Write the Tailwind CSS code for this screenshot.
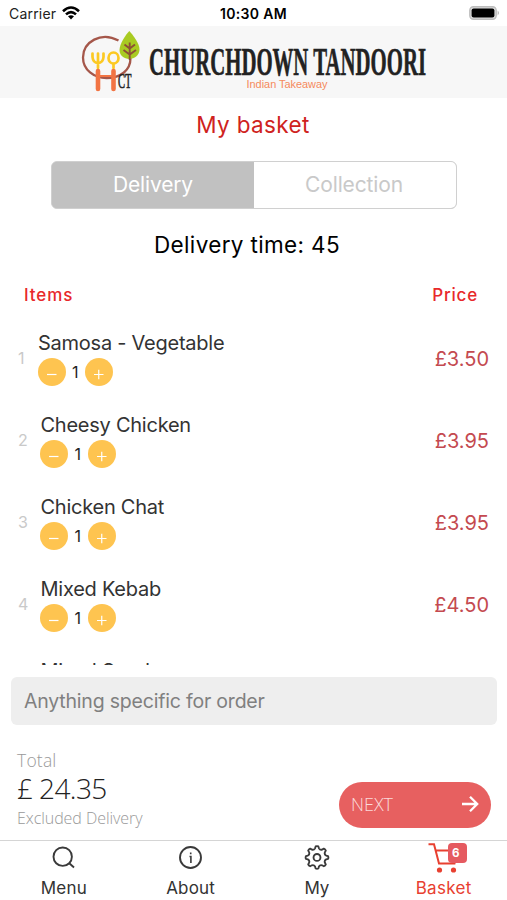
<!DOCTYPE html>
<html lang="en">
<head>
<meta charset="utf-8">
<title>My basket</title>
<script src="https://cdn.jsdelivr.net/npm/@tailwindcss/browser@4"></script>
</head>
<body class="bg-white">
<div class="flex h-[900px] w-[507px] flex-col overflow-hidden bg-white font-['Inter',sans-serif] text-[#333]">
  <!-- Status bar -->
  <div class="grid h-[26px] shrink-0 grid-cols-3 items-center pl-[9px] pr-[7px] pt-[2px] text-[14px] leading-none text-black">
    <div class="flex items-center gap-[6px]"><span class="tracking-[0.2px] text-[#222]">Carrier</span>
      <svg class="-mt-[2px] h-[14px] w-[18px]" viewBox="0 0 18 14"><g fill="none" stroke="#000" stroke-width="2.6"><path d="M1 5.2Q9-2.2 17 5.2"/><path d="M4 8.4Q9 3.8 14 8.4"/></g><path d="M6 10.3Q9 8 12 10.3L9 13.5Z"/></svg>
    </div>
    <div class="whitespace-nowrap pr-[2px] text-center font-semibold tracking-[0.3px]">10:30 AM</div>
    <svg class="-mt-[2px] h-[14px] w-[31px] justify-self-end" viewBox="0 0 31 14"><rect x=".8" y=".8" width="26.4" height="12.4" rx="3.6" fill="#ddd" stroke="#bdbdbd" stroke-width="1.4"/><rect x="2.6" y="2.6" width="22.8" height="8.8" rx="2" fill="#000"/><path d="M28.7 4.6Q31 7 28.7 9.4Z" fill="#aaa"/></svg>
  </div>
  <!-- Brand header -->
  <header class="h-[72px] shrink-0 bg-[#f7f7f7]">
    <svg class="block h-[72px] w-[507px]" viewBox="0 26 507 72">
      <path d="M118.500 40.500C101 31 83 42 83 57.500C83 70 94 78 106.500 78C121 78 130.500 70 130.500 58V53" fill="none" stroke="#a5574a" stroke-width="2.300"/>
      <path d="M129.300 31C133 35 140 44 139.500 50C139 55.500 134.500 59 129.300 59C124 59 119.500 55.500 119.500 50C119.500 44 125.500 35 129.300 31Z" fill="#a9cb22"/>
      <path d="M129.700 42.500V60M124.500 44.500L129.700 48.500L135 44.500M123.500 50L129.700 54.500L136 50" fill="none" stroke="#8d5135" stroke-width="1.900"/>
      <g fill="none" stroke="#fcc923" stroke-width="2.700" stroke-linecap="round"><path d="M92.500 53.500V57Q93 63 98 63Q103 63 103.500 57V53.500M98 53.500V68"/><ellipse cx="113.500" cy="58" rx="5" ry="5.500"/><path d="M113.500 64V68"/></g>
      <g fill="none" stroke="#f27443" stroke-linecap="round" stroke-width="4.600"><path d="M98 71V89M113.500 71V89"/><path d="M98 76H113" stroke-width="2"/></g>
      <text x="118" y="88" textLength="13.500" lengthAdjust="spacingAndGlyphs" font-family="Liberation Serif, serif" font-size="20" fill="#222" stroke="#222" stroke-width=".6">CT</text>
      <text x="149" y="74.500" textLength="277" lengthAdjust="spacingAndGlyphs" font-family="Liberation Serif, serif" font-weight="700" font-size="41" fill="#222" stroke="#222" stroke-width=".6">CHURCHDOWN TANDOORI</text>
      <text x="246.500" y="88.300" textLength="81" lengthAdjust="spacingAndGlyphs" font-family="Liberation Sans, sans-serif" font-size="11" fill="#f58a5c">Indian Takeaway</text>
    </svg>
  </header>

  <h1 class="mt-[12px] h-[30px] shrink-0 pr-px text-center text-[22.500px] leading-[30px] tracking-[0.350px] text-[#cf2220]">My basket</h1>

  <div class="ml-[51px] mt-[20.500px] grid h-[48px] w-[406px] shrink-0 grid-cols-2 overflow-hidden rounded-[6px] border-[1.500px] border-[#d0d0d0] bg-[#c1c1c1] text-center text-[21px] leading-[46px] tracking-[-0.150px]">
    <div class="bg-[#c1c1c1] text-white">Delivery</div>
    <div class="bg-white pr-[2px] text-[#c9c9c9]">Collection</div>
  </div>

  <div class="mt-[21.500px] h-[30px] shrink-0 pr-[13px] text-center text-[22.500px] leading-[30px] tracking-[0.350px] text-black">Delivery time: 45</div>

  <div class="mt-[24px] flex h-[22px] shrink-0 justify-between pl-[24px] pr-[29px] text-[17px] font-medium leading-[22px] text-[#e8282a]">
    <span class="tracking-[0.900px]">Items</span><span class="tracking-[0.800px]">Price</span>
  </div>

  <!-- Basket items, clipped at the bottom edge -->
  <ul id="items" class="h-[359px] shrink-0 overflow-hidden pt-[25px]"></ul>

  <div class="ml-[11px] mt-[12px] h-[48px] w-[486px] shrink-0 rounded-[6px] bg-[#eee] pl-[13px] text-[19.500px] leading-[48px] tracking-[-0.200px] text-[#808080]">Anything specific for order</div>

  <div class="flex h-[115px] shrink-0 items-start justify-between pl-[17px] pr-[16px] font-['Open_Sans',sans-serif] font-light">
    <div class="pt-[23px]">
      <div class="h-[24px] text-[17.500px] leading-[25px] tracking-[0.200px] text-[#999]">Total</div>
      <div class="h-[33px] text-[28px] leading-[33px] tracking-[-0.600px] text-[#222]">£ 24.35</div>
      <div class="h-[26px] text-[16px] leading-[26px] tracking-[-0.060px] text-[#999]">Excluded Delivery</div>
    </div>
    <div class="mt-[57px] flex h-[46px] w-[152px] items-center justify-between rounded-full bg-[#e76060] pl-[12px] pr-[12px] text-[18px] text-white"><span class="-mt-px text-[#fbdada]">NEXT</span>
      <svg class="-mt-[2px] h-[18px] w-[18px]" viewBox="0 0 18 18" fill="none" stroke="#fff" stroke-width="2.300"><path d="M1 9H16M9 1.800L16.200 9L9 16.200"/></svg>
    </div>
  </div>

  <!-- Tab bar -->
  <nav class="grid h-[60px] shrink-0 grid-cols-4 border-t border-[#d5d5d5] text-center text-[17px] leading-[22px]">
    <div class="flex flex-col items-center"><svg class="mt-[4px] h-[26px] w-[26px]" viewBox="0 0 26 26" fill="none" stroke="#3a3a3a" stroke-width="1.900"><circle cx="12.700" cy="11.700" r="9.200"/><path d="M19 18L24 22.500"/></svg><span class="mt-[6px] pl-px tracking-[0.200px]">Menu</span></div>
    <div class="flex flex-col items-center"><svg class="mt-[4px] h-[26px] w-[26px]" viewBox="0 0 26 26" fill="none" stroke="#3a3a3a" stroke-width="1.900"><circle cx="13.500" cy="12.500" r="10.500"/><path d="M12.500 11.500H13.900V18M13.700 7.500V9.300" stroke-width="1.600"/></svg><span class="mt-[6px] pl-px tracking-[0.200px]">About</span></div>
    <div class="flex flex-col items-center"><svg class="mt-[4px] h-[26px] w-[26px]" viewBox="0 0 24 24" fill="none" stroke="#3a3a3a" stroke-width="1.700" stroke-linejoin="round"><circle cx="12" cy="11.500" r="3.200"/><path id="gear" transform="translate(0 -.5)"/></svg><span class="mt-[6px]">My</span></div>
    <div class="flex flex-col items-center text-[#e84030]">
      <div class="relative mt-[1px] h-[31px] w-[38px]">
        <svg class="h-[31px] w-[38px]" viewBox="0 0 38 31" fill="none" stroke="#e84030" stroke-width="2"><path d="M3.500 2.200H9L14 21.500H29.500L32 8.500H10.500"/><circle cx="14.500" cy="28" r="2.600" fill="#e84030" stroke="none"/><circle cx="28.500" cy="28" r="2.600" fill="#e84030" stroke="none"/></svg>
        <span class="absolute left-[23px] top-[1px] h-[20px] w-[19px] rounded-[4px] bg-[#e55a60] pr-[3px] text-[11.500px] font-bold leading-[20px] text-white">6</span>
      </div>
      <span class="mt-[4px] tracking-[0.300px]">Basket</span>
    </div>
  </nav>
</div>
<template id="row">
  <li class="flex h-[82px] justify-between pr-[18px]">
    <div class="flex">
      <span class="num w-[38px] pl-[18px] pt-[17px] text-[16px] leading-[20px] text-[#c9c9c9]"></span>
      <div class="body">
        <div class="name h-[27px] text-[20px] leading-[24px] tracking-[-0.250px] whitespace-nowrap"></div>
        <div class="-ml-[0.500px] flex items-center">
          <svg class="h-[28px] w-[28px]" viewBox="0 0 28 28"><circle cx="14" cy="14" r="14" fill="#fec450"/><path d="M9 16.500H18.500" stroke="#fff" stroke-width="1.200"/></svg>
          <span class="w-[19.500px] text-center text-[16px] leading-[28px] text-[#222]">1</span>
          <svg class="h-[28px] w-[28px]" viewBox="0 0 28 28"><circle cx="14" cy="14" r="14" fill="#fec450"/><path d="M9 16.500H18.500M13.750 11.800V21.200" stroke="#fff" stroke-width="1.200"/></svg>
        </div>
      </div>
    </div>
    <span class="price pt-[16px] text-[20px] leading-[24px] text-[#c44a50]"></span>
  </li>
</template>
<script>
const items = [["Samosa - Vegetable", "£3.50"], ["Cheesy Chicken", "£3.95"], ["Chicken Chat", "£3.95"], ["Mixed Kebab", "£4.50"], ["Mixed Sundry", "£4.50"]];
const list = document.getElementById("items"), tpl = document.getElementById("row");
items.forEach(([name, price], i) => {
  const n = tpl.content.cloneNode(true);
  n.querySelector(".num").textContent = i + 1;
  n.querySelector(".name").textContent = name;
  n.querySelector(".price").textContent = price;
  if (i > 0) n.querySelector(".body").classList.add("pl-[2.500px]");
  list.appendChild(n);
});
// Eight-toothed cog outline
let d = "";
for (let k = 0; k < 8; k++) {
  const p = (r, a) => { const t = (k * 45 + a - 90) * Math.PI / 180; return (12 + r * Math.cos(t)).toFixed(2) + " " + (12 + r * Math.sin(t)).toFixed(2); };
  d += (k ? "L" : "M") + p(10.3, -7) + "Q" + p(10.800, 0) + " " + p(10.3, 7) + "L" + p(8.6, 12) + "Q" + p(7.2, 22.5) + " " + p(8.6, 33);
}
document.getElementById("gear").setAttribute("d", d + "Z");
</script>
</body>
</html>
